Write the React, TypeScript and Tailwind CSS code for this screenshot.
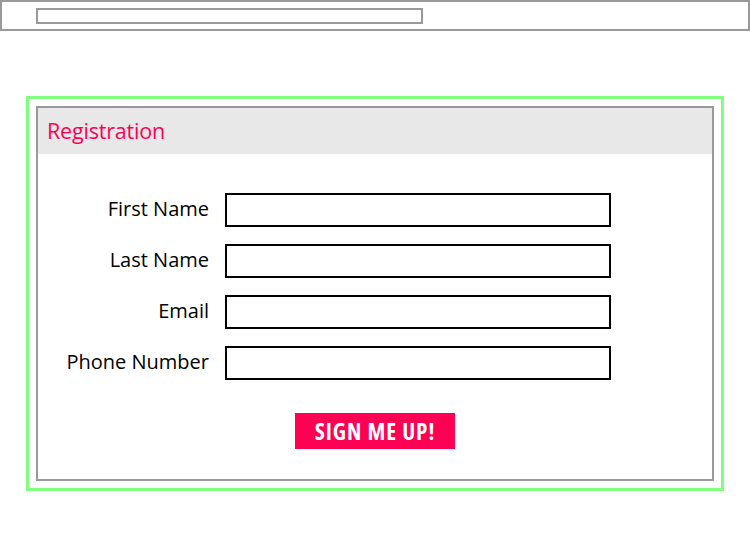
const fields = ['First Name', 'Last Name', 'Email', 'Phone Number'];

export default function App() {
  return (
    <div className="w-[750px] h-[550px] bg-white" style={{ fontFamily: '"Open Sans", "Liberation Sans", sans-serif' }}>
      <div className="h-[31px] border-2 border-[#999999] pl-[34px] pt-[6px]">
        <div className="w-[387px] h-[16px] border-2 border-[#999999]" />
      </div>

      <div className="ml-[26px] mt-[65px] w-[698px] h-[395px] border-[3px] border-[#80ff80] p-[7px]">
        <div className="h-full border-2 border-[#999999] flex flex-col">
          <div className="h-[46px] bg-[#e8e8e8] flex items-center px-[9px]">
            <h1 className="text-[21.5px] text-[#ff0055] tracking-[-0.2px]">Registration</h1>
          </div>

          <div className="flex flex-col gap-[17px] pt-[39px]">
            {fields.map((f) => (
              <div key={f} className="flex items-center">
                <label className="w-[171px] text-right text-[20px] text-black pb-[3px]">{f}</label>
                <input className="ml-[16px] w-[386px] h-[34px] border-2 border-black outline-none" />
              </div>
            ))}
          </div>

          <div className="flex justify-center mt-[33px]">
            <button className="w-[160px] h-[36px] bg-[#ff0055] text-white text-[23px] font-bold font-stretch-condensed tracking-[1px]">
              SIGN ME UP!
            </button>
          </div>
        </div>
      </div>
    </div>
  );
}
